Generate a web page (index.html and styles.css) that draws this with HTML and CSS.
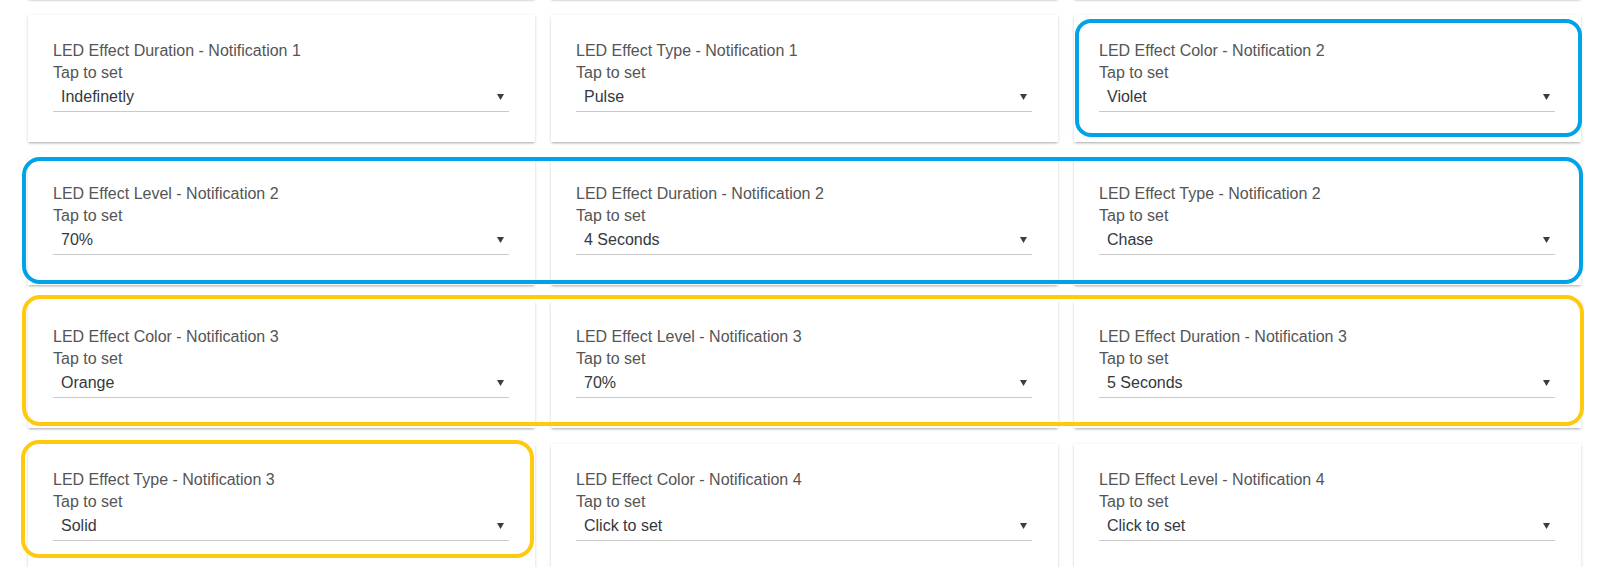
FILE: index.html
```html
<!DOCTYPE html>
<html lang="en">
<head>
    <meta charset="UTF-8">
    <meta name="viewport" content="width=device-width, initial-scale=1.0">
    <title>LED Effect Settings</title>
    <link rel="stylesheet" href="styles.css">
</head>
<body>
    <div class="tile-grid">
        <!-- row scrolled out of view, only its bottom edge shows -->
        <div class="tile"></div>
        <div class="tile"></div>
        <div class="tile"></div>

        <div class="tile">
            <div class="tile-title">LED Effect Duration - Notification 1</div>
            <div class="tile-hint">Tap to set</div>
            <div class="picker"><span class="picker-value">Indefinetly</span><svg class="picker-arrow" width="7" height="6" viewBox="0 0 7 6"><polygon points="0,0 7,0 3.5,6"/></svg></div>
        </div>
        <div class="tile">
            <div class="tile-title">LED Effect Type - Notification 1</div>
            <div class="tile-hint">Tap to set</div>
            <div class="picker"><span class="picker-value">Pulse</span><svg class="picker-arrow" width="7" height="6" viewBox="0 0 7 6"><polygon points="0,0 7,0 3.5,6"/></svg></div>
        </div>
        <div class="tile">
            <div class="tile-title">LED Effect Color - Notification 2</div>
            <div class="tile-hint">Tap to set</div>
            <div class="picker"><span class="picker-value">Violet</span><svg class="picker-arrow" width="7" height="6" viewBox="0 0 7 6"><polygon points="0,0 7,0 3.5,6"/></svg></div>
        </div>

        <div class="tile">
            <div class="tile-title">LED Effect Level - Notification 2</div>
            <div class="tile-hint">Tap to set</div>
            <div class="picker"><span class="picker-value">70%</span><svg class="picker-arrow" width="7" height="6" viewBox="0 0 7 6"><polygon points="0,0 7,0 3.5,6"/></svg></div>
        </div>
        <div class="tile">
            <div class="tile-title">LED Effect Duration - Notification 2</div>
            <div class="tile-hint">Tap to set</div>
            <div class="picker"><span class="picker-value">4 Seconds</span><svg class="picker-arrow" width="7" height="6" viewBox="0 0 7 6"><polygon points="0,0 7,0 3.5,6"/></svg></div>
        </div>
        <div class="tile">
            <div class="tile-title">LED Effect Type - Notification 2</div>
            <div class="tile-hint">Tap to set</div>
            <div class="picker"><span class="picker-value">Chase</span><svg class="picker-arrow" width="7" height="6" viewBox="0 0 7 6"><polygon points="0,0 7,0 3.5,6"/></svg></div>
        </div>

        <div class="tile">
            <div class="tile-title">LED Effect Color - Notification 3</div>
            <div class="tile-hint">Tap to set</div>
            <div class="picker"><span class="picker-value">Orange</span><svg class="picker-arrow" width="7" height="6" viewBox="0 0 7 6"><polygon points="0,0 7,0 3.5,6"/></svg></div>
        </div>
        <div class="tile">
            <div class="tile-title">LED Effect Level - Notification 3</div>
            <div class="tile-hint">Tap to set</div>
            <div class="picker"><span class="picker-value">70%</span><svg class="picker-arrow" width="7" height="6" viewBox="0 0 7 6"><polygon points="0,0 7,0 3.5,6"/></svg></div>
        </div>
        <div class="tile">
            <div class="tile-title">LED Effect Duration - Notification 3</div>
            <div class="tile-hint">Tap to set</div>
            <div class="picker"><span class="picker-value">5 Seconds</span><svg class="picker-arrow" width="7" height="6" viewBox="0 0 7 6"><polygon points="0,0 7,0 3.5,6"/></svg></div>
        </div>

        <div class="tile">
            <div class="tile-title">LED Effect Type - Notification 3</div>
            <div class="tile-hint">Tap to set</div>
            <div class="picker"><span class="picker-value">Solid</span><svg class="picker-arrow" width="7" height="6" viewBox="0 0 7 6"><polygon points="0,0 7,0 3.5,6"/></svg></div>
        </div>
        <div class="tile">
            <div class="tile-title">LED Effect Color - Notification 4</div>
            <div class="tile-hint">Tap to set</div>
            <div class="picker"><span class="picker-value">Click to set</span><svg class="picker-arrow" width="7" height="6" viewBox="0 0 7 6"><polygon points="0,0 7,0 3.5,6"/></svg></div>
        </div>
        <div class="tile">
            <div class="tile-title">LED Effect Level - Notification 4</div>
            <div class="tile-hint">Tap to set</div>
            <div class="picker"><span class="picker-value">Click to set</span><svg class="picker-arrow" width="7" height="6" viewBox="0 0 7 6"><polygon points="0,0 7,0 3.5,6"/></svg></div>
        </div>
    </div>

    <!-- hand-drawn highlight marks over the tiles -->
    <div class="mark mark-blue mark-n2-color"></div>
    <div class="mark mark-blue mark-n2-row"></div>
    <div class="mark mark-gold mark-n3-row"></div>
    <div class="mark mark-gold mark-n3-type"></div>
</body>
</html>
```

FILE: styles.css
```css
body {
    margin: 0;
    position: relative;
    background: #fff;
    font-family: "Liberation Sans", Arial, sans-serif;
    overflow: hidden;
}

.tile-grid {
    display: grid;
    grid-template-columns: repeat(3, 1fr);
    gap: 16px;
    padding: 0 21px 40px 28px;
    margin-top: -128px;
}

.tile {
    background: #fff;
    height: 127px;
    box-sizing: border-box;
    padding: 25px 26px 0 25px;
    box-shadow: 0 1px 3px rgba(0, 0, 0, 0.16), 0 2px 2px -1px rgba(0, 0, 0, 0.2);
}

.tile-title,
.tile-hint {
    font-size: 16px;
    line-height: 21px;
    color: #555;
}

.tile-hint {
    margin-top: 1px;
}

.picker {
    display: flex;
    justify-content: space-between;
    align-items: center;
    height: 29px;
    box-sizing: border-box;
    padding: 0 5px 0 8px;
    border-bottom: 1px solid #cacaca;
    font-size: 16px;
    color: #34383e;
}

.picker-arrow {
    fill: #3a3d44;
    margin-top: -1px;
}

.mark {
    position: absolute;
    box-sizing: border-box;
    border: 4px solid;
    border-radius: 18px;
    pointer-events: none;
}

.mark-blue {
    border-color: #00a2e8;
}

.mark-gold {
    border-color: #ffc90e;
}

.mark-n2-color {
    left: 1075px;
    top: 19px;
    width: 507px;
    height: 118px;
    border-radius: 16px;
}

.mark-n2-row {
    left: 22px;
    top: 157px;
    width: 1561px;
    height: 127px;
}

.mark-n3-row {
    left: 22px;
    top: 295px;
    width: 1562px;
    height: 131px;
}

.mark-n3-type {
    left: 21px;
    top: 440px;
    width: 513px;
    height: 118px;
}
```
